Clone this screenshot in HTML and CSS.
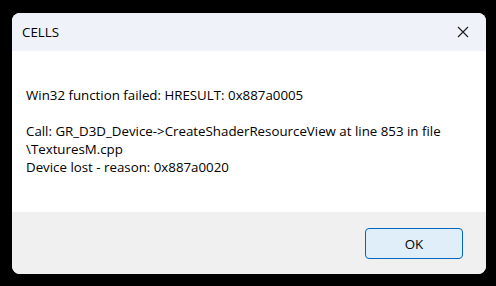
FILE: index.html
```html
<!DOCTYPE html>
<html>
<head>
<meta charset="utf-8">
<link rel="stylesheet" href="styles.css">
</head>
<body>
<div class="window">
  <div class="titlebar">
    <span class="title">CELLS</span>
    <span class="close">
      <svg width="12" height="12" viewBox="0 0 12 12"><path d="M1 1 L11 11 M11 1 L1 11" stroke="#1a1a1a" stroke-width="1.1" fill="none"/></svg>
    </span>
  </div>
  <div class="content">
    <p class="msg">Win32 function failed: HRESULT: 0x887a0005</p>
    <p class="msg">Call: GR_D3D_Device-&gt;CreateShaderResourceView at line 853 in file<br>\TexturesM.cpp<br>Device lost - reason: 0x887a0020</p>
  </div>
  <div class="footer">
    <button class="ok">OK</button>
  </div>
</div>
</body>
</html>
```
FILE: styles.css
```css
html, body {
  margin: 0;
  padding: 0;
  background: #000;
  width: 496px;
  height: 286px;
  overflow: hidden;
}
body {
  padding: 13px 10px 12px 12px;
  box-sizing: border-box;
  font-family: "Open Sans", "Noto Sans", sans-serif;
}
.window {
  width: 474px;
  height: 261px;
  border-radius: 8px;
  overflow: hidden;
  display: flex;
  flex-direction: column;
  background: #fff;
}
.titlebar {
  height: 38px;
  background: #eff3f9;
  display: flex;
  align-items: center;
  justify-content: space-between;
  padding: 0 0 0 10px;
}
.title {
  font-size: 13.3px;
  color: #000;
}
.close {
  width: 46px;
  display: flex;
  justify-content: center;
  align-items: center;
}
.content {
  flex: 1;
  background: #fff;
  padding: 35px 14px 0 14px;
}
.msg {
  margin: 0 0 18px 0;
  font-size: 13.3px;
  line-height: 18px;
  color: #000;
}
.footer {
  height: 62px;
  background: #f0f0f0;
  display: flex;
  justify-content: flex-end;
  align-items: flex-start;
  padding: 16px 23px 0 0;
  box-sizing: border-box;
}
.ok {
  width: 98px;
  height: 31px;
  border: 1px solid #0067c0;
  border-radius: 4px;
  background: #e0eef9;
  font-family: inherit;
  font-size: 13.3px;
  color: #000;
  padding: 0;
}
```
